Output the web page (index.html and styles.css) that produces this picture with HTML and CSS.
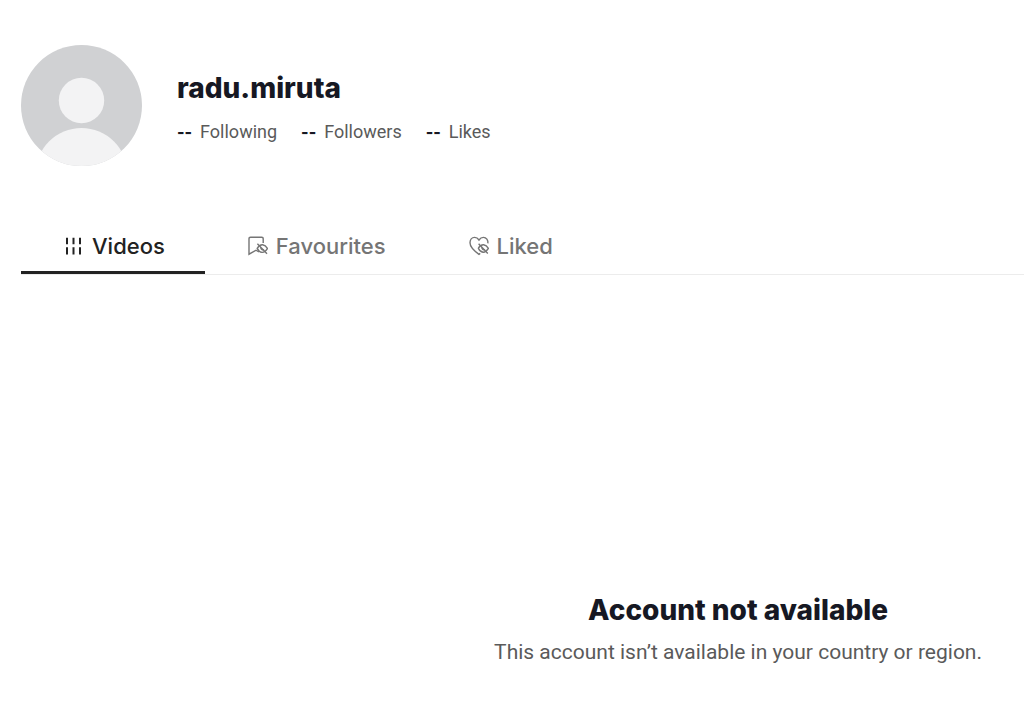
FILE: index.html
```html
<!DOCTYPE html>
<html lang="en">
<head>
  <meta charset="UTF-8" />
  <meta name="viewport" content="width=device-width, initial-scale=1.0" />
  <title>radu.miruta</title>
  <link rel="stylesheet" href="styles.css">
</head>
<body>
  <header class="profile">
    <svg class="avatar" viewBox="0 0 121 121" role="img" aria-label="Profile picture">
      <defs>
        <clipPath id="avatarClip"><circle cx="60.5" cy="60.5" r="60.5" /></clipPath>
      </defs>
      <g clip-path="url(#avatarClip)">
        <rect width="121" height="121" fill="#d0d1d3" />
        <circle cx="60.5" cy="55.5" r="22.7" fill="#f3f3f4" />
        <circle cx="60.5" cy="129" r="46" fill="#f3f3f4" />
      </g>
    </svg>
    <div class="profile-info">
      <h1 class="username">radu.miruta</h1>
      <ul class="stats">
        <li><strong>--</strong><span>Following</span></li>
        <li><strong>--</strong><span>Followers</span></li>
        <li><strong>--</strong><span>Likes</span></li>
      </ul>
    </div>
  </header>

  <nav class="tabs">
    <button class="tab active" type="button">
      <svg class="tab-icon" viewBox="0 0 20 20" aria-hidden="true">
        <path d="M3 1.8v6.4M9.5 1.8v6.4M16 1.8v6.4M3 11.2v7.2M9.5 11.2v7.2M16 11.2v7.2" stroke-width="2" />
      </svg>
      Videos
    </button>
    <button class="tab" type="button">
      <svg class="tab-icon" viewBox="0 0 20 20" aria-hidden="true">
        <path d="M15.2 7V2.7Q15.2 1.2 13.7 1.2H2.5Q1 1.2 1 2.7V18.2L8 14.2L11 16" />
        <path d="M9.2 12.4Q11.5 8.6 14.6 8.8Q17.6 9.2 19.5 12.6Q17 16.6 14 16.4Q10.8 16 9.2 12.4Z" />
        <path d="M12.6 11.2Q13.2 14.6 16.2 13.8M9.4 7.8L19 17.8" />
      </svg>
      Favourites
    </button>
    <button class="tab" type="button">
      <svg class="tab-icon" viewBox="0 0 20 20" aria-hidden="true">
        <path d="M18.9 7.4C19.3 4.2 17.3 1.4 14.4 1.4C12.4 1.4 11 2.5 10 4C9 2.5 7.6 1.4 5.6 1.4C2.8 1.4 1 3.8 1 6.8C1 11.5 6 15.5 10 18.4L11.2 17.4" />
        <path d="M9.4 12.2Q11.6 8.6 14.6 8.8Q17.6 9.2 19.4 12.4Q17 16.4 14 16.2Q10.8 15.8 9.4 12.2Z" />
        <path d="M12.6 11Q13.2 14.4 16.2 13.6M9.6 7.8L18.8 17.4" />
      </svg>
      Liked
    </button>
  </nav>

  <main class="notice">
    <h2 class="notice-title">Account not available</h2>
    <p class="notice-text">This account isn’t available in your country or region.</p>
  </main>
</body>
</html>
```

FILE: styles.css
```css
* {
  box-sizing: border-box;
}

body {
  margin: 0;
  padding: 45px 0 0 21px;
  font-family: Inter, "Liberation Sans", sans-serif;
  background: #fff;
  color: #161823;
}

.profile {
  display: flex;
  align-items: center;
  gap: 35px;
}

.avatar {
  width: 121px;
  height: 121px;
  flex: none;
}

.username {
  margin: 4px 0 12px;
  font-size: 28px;
  line-height: 36px;
  font-weight: 800;
}

.stats {
  display: flex;
  gap: 24px;
  margin: 0;
  padding: 0;
  list-style: none;
  font-family: Roboto, "Liberation Sans", sans-serif;
  font-size: 18px;
  line-height: 28px;
  color: #5a5a5a;
}

.stats li {
  display: flex;
  gap: 8px;
}

.stats strong {
  font-family: Inter, "Liberation Sans", sans-serif;
  font-size: 16px;
  font-weight: 800;
  color: #161823;
}

.tabs {
  display: flex;
  margin-top: 54px;
  border-bottom: 1px solid #ececec;
}

.tab {
  display: flex;
  align-items: center;
  justify-content: center;
  gap: 8px;
  height: 54px;
  padding: 1px 40px 0 43px;
  border: 0;
  border-bottom: 3px solid transparent;
  background: none;
  font: 500 22px/28px Inter, "Liberation Sans", sans-serif;
  color: #757575;
  cursor: pointer;
}

.tab.active {
  border-bottom-color: #222;
  color: #222;
}

.tab-icon {
  width: 20px;
  height: 20px;
  fill: none;
  stroke: currentColor;
  stroke-width: 1.4;
}

.notice {
  padding: 317px 42px 0 0;
  width: fit-content;
  margin-left: auto;
  text-align: center;
}

.notice-title {
  margin: 0 0 10px;
  font-size: 28px;
  line-height: 36px;
  font-weight: 800;
}

.notice-text {
  margin: 0;
  font-family: Roboto, "Liberation Sans", sans-serif;
  font-size: 21px;
  line-height: 28px;
  color: #5a5a5a;
}
```
